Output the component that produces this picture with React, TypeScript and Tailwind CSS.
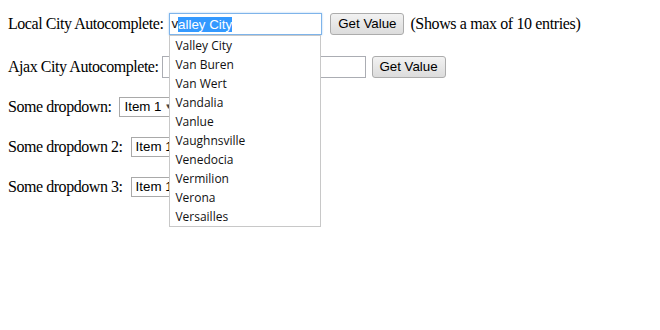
const CITIES = [
  "Valley City",
  "Van Buren",
  "Van Wert",
  "Vandalia",
  "Vanlue",
  "Vaughnsville",
  "Venedocia",
  "Vermilion",
  "Verona",
  "Versailles",
];

function Button({ label }: { label: string }) {
  return (
    <div className="flex h-[22px] w-[74px] items-center justify-center rounded-[3px] border border-[#acacac] bg-gradient-to-b from-[#f2f2f2] to-[#dcdcdc] font-['Liberation_Sans'] text-[13.33px] tracking-normal text-black">
      {label}
    </div>
  );
}

function Select() {
  return (
    <div className="relative flex h-[20px] w-[60px] items-center border border-[#a9a9a9] bg-white pl-[4px] font-['Liberation_Sans'] text-[13.33px] tracking-normal text-black">
      Item 1
      <span className="absolute right-[6px] top-[3px] text-[8px] text-[#444]">▼</span>
    </div>
  );
}

export default function App() {
  return (
    <div className="min-h-[330px] w-[660px] bg-white pl-2 pt-[12px] font-['Liberation_Serif'] text-[16px] tracking-[-0.45px] text-black">
      {/* local autocomplete */}
      <div className="flex h-[24px] items-center">
        <span>Local City Autocomplete:</span>
        <div className="relative z-10 ml-[6px]">
          <div className="flex h-[22px] w-[153px] items-center border border-[#7eb4ea] bg-white pl-[1px] font-['Liberation_Sans'] text-[13.33px] tracking-normal text-[#111] shadow-[0_0_2px_#a9cdf2]">
            v<span className="bg-[#3399ff] leading-[15px] text-white">alley City</span>
          </div>
          <ul className="absolute left-0 top-[22px] w-[152px] border border-[#c8c8c8] bg-white font-['Open_Sans'] text-[12px] tracking-normal text-[#111]">
            {CITIES.map((c) => (
              <li key={c} className="h-[19px] pl-[5px] leading-[19px]">
                {c}
              </li>
            ))}
          </ul>
        </div>
        <div className="ml-[8px]">
          <Button label="Get Value" />
        </div>
        <span className="ml-[6px] tracking-[-0.37px]">(Shows a max of 10 entries)</span>
      </div>

      {/* ajax autocomplete */}
      <div className="mt-[19px] flex h-[24px] items-center">
        <span>Ajax City Autocomplete:</span>
        <div className="ml-[3px] h-[22px] w-[204px] border border-[#abadb3] bg-white" />
        <div className="ml-[6px]">
          <Button label="Get Value" />
        </div>
      </div>

      {/* dropdowns */}
      <div className="mt-[16px] flex h-[24px] items-center">
        <span>Some dropdown:</span>
        <div className="ml-[8px]">
          <Select />
        </div>
      </div>
      <div className="mt-[16px] flex h-[24px] items-center">
        <span>Some dropdown 2:</span>
        <div className="ml-[8px]">
          <Select />
        </div>
      </div>
      <div className="mt-[16px] flex h-[24px] items-center">
        <span>Some dropdown 3:</span>
        <div className="ml-[8px]">
          <Select />
        </div>
      </div>
    </div>
  );
}
